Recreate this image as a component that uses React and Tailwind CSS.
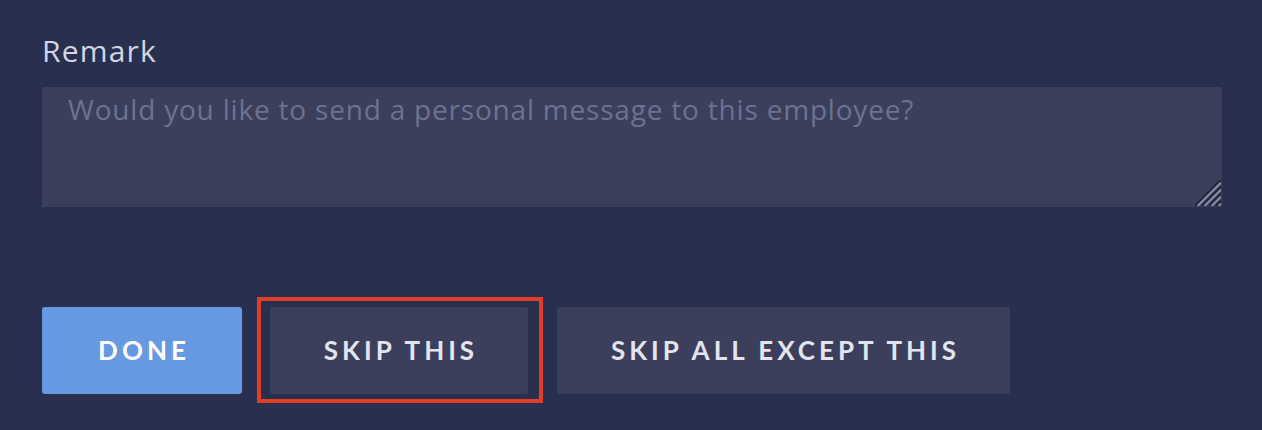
import { useState } from "react";

const font = { fontFamily: "Lato, 'Open Sans', sans-serif" };
const bodyFont = { fontFamily: "'Open Sans', Lato, sans-serif" };

function ResizeGrip() {
  // diagonal grip drawn over the textarea corner
  return (
    <svg
      className="absolute right-[1px] bottom-[1px] pointer-events-none"
      width="26"
      height="26"
      viewBox="0 0 26 26"
    >
      {[0, 7, 14, 21].map((o) => (
        <g key={o}>
          <line x1={o} y1="26" x2="26" y2={o} stroke="#1d2036" strokeWidth="2" />
          <line x1={o + 2.5} y1="26" x2="26" y2={o + 2.5} stroke="#8b8fa8" strokeWidth="2" />
        </g>
      ))}
    </svg>
  );
}

export default function App() {
  const [remark, setRemark] = useState("");

  return (
    <div className="w-full h-[430px] bg-[#292f4f] px-[42px] pt-[33px]" style={font}>
      {/* Remark field */}
      <label
        className="block text-[30px] leading-[36px] tracking-[1.2px] text-[#d3d6e2] mb-[18px]"
        style={bodyFont}
      >
        Remark
      </label>
      <div className="relative w-[1180px] h-[120px]">
        <textarea
          value={remark}
          onChange={(e) => setRemark(e.target.value)}
          placeholder="Would you like to send a personal message to this employee?"
          className="block w-full h-full resize-none bg-[#3b3f5b] text-[28px] leading-[1.2] tracking-[0.8px] text-[#d3d6e2] placeholder:text-[#6c7290] pl-[26px] pt-[6px] outline-none"
          style={bodyFont}
        />
        <ResizeGrip />
      </div>

      {/* Actions */}
      <div className="flex gap-[28px] mt-[100px]">
        <button className="w-[200px] h-[87px] rounded-[3px] bg-[#6699e1] text-white text-[26px] font-bold tracking-[4px] pl-[4px] flex items-center justify-center">
          DONE
        </button>
        <button className="relative w-[258px] h-[87px] rounded-[3px] bg-[#3b3f5b] text-[#e3e5ee] text-[26px] font-bold tracking-[4px] pl-[4px] flex items-center justify-center">
          SKIP THIS
          <span className="absolute -left-[13px] -top-[10px] -right-[15px] -bottom-[9px] border-[4.5px] border-[#e23d27] pointer-events-none" />
        </button>
        <button className="w-[453px] ml-[1px] h-[87px] rounded-[3px] bg-[#3b3f5b] text-[#e3e5ee] text-[26px] font-bold tracking-[4px] pl-[4px] flex items-center justify-center">
          SKIP ALL EXCEPT THIS
        </button>
      </div>
    </div>
  );
}
